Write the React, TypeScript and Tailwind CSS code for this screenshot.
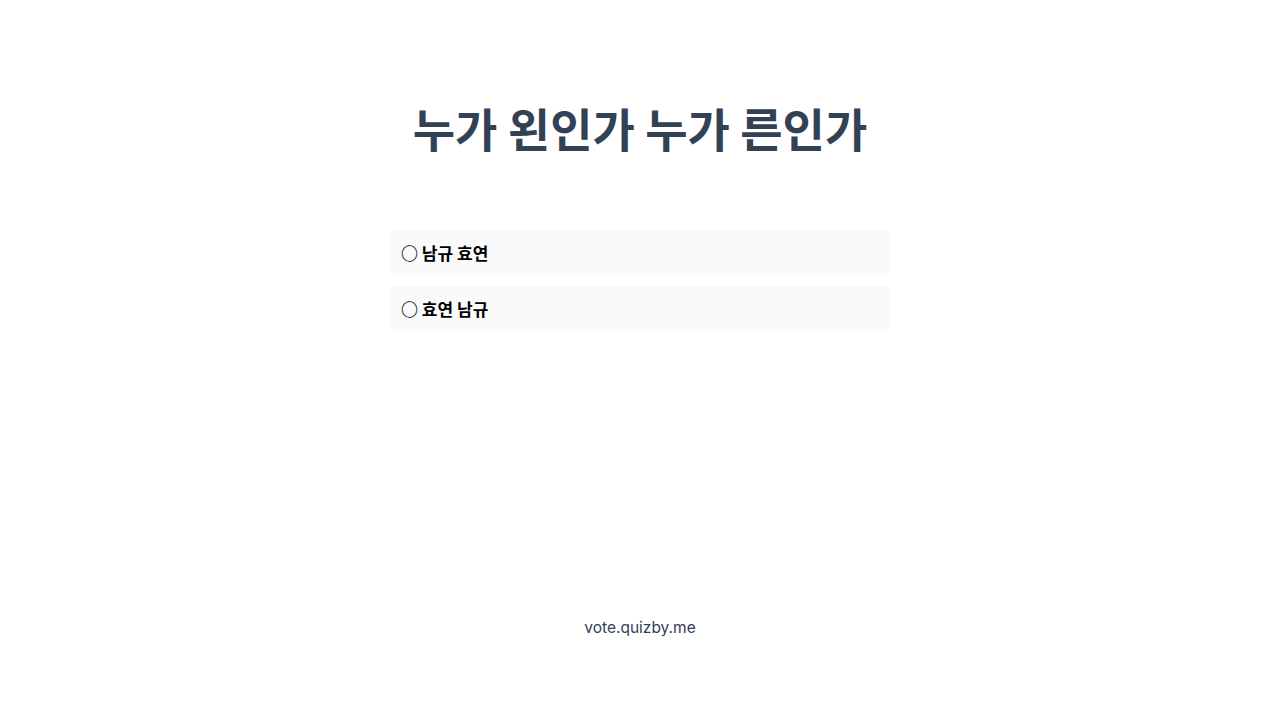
import React from "react";

export default function App() {
  const options = ["남규 효연", "효연 남규"];
  return (
    <div className="min-h-screen w-full bg-white flex flex-col items-center" style={{ fontFamily: '"Noto Sans CJK KR", "Noto Sans", sans-serif' }}>
      <h1 className="mt-[92px] text-[46px] leading-[70px] font-bold text-[#334155] tracking-[0px]">
        누가 왼인가 누가 른인가
      </h1>
      <div className="mt-[68px] w-[500px] flex flex-col gap-[11px]">
        {options.map((o) => (
          <div key={o} className="h-[45px] rounded-md bg-[#fafafa] flex items-center px-[11px] text-[17px] font-bold text-black">
            ○ {o}
          </div>
        ))}
      </div>
      <div className="mt-[285px] text-[15.5px] text-[#334155]" style={{ fontFamily: '"Inter", "Lato", sans-serif' }}>
        vote.quizby.me
      </div>
    </div>
  );
}
